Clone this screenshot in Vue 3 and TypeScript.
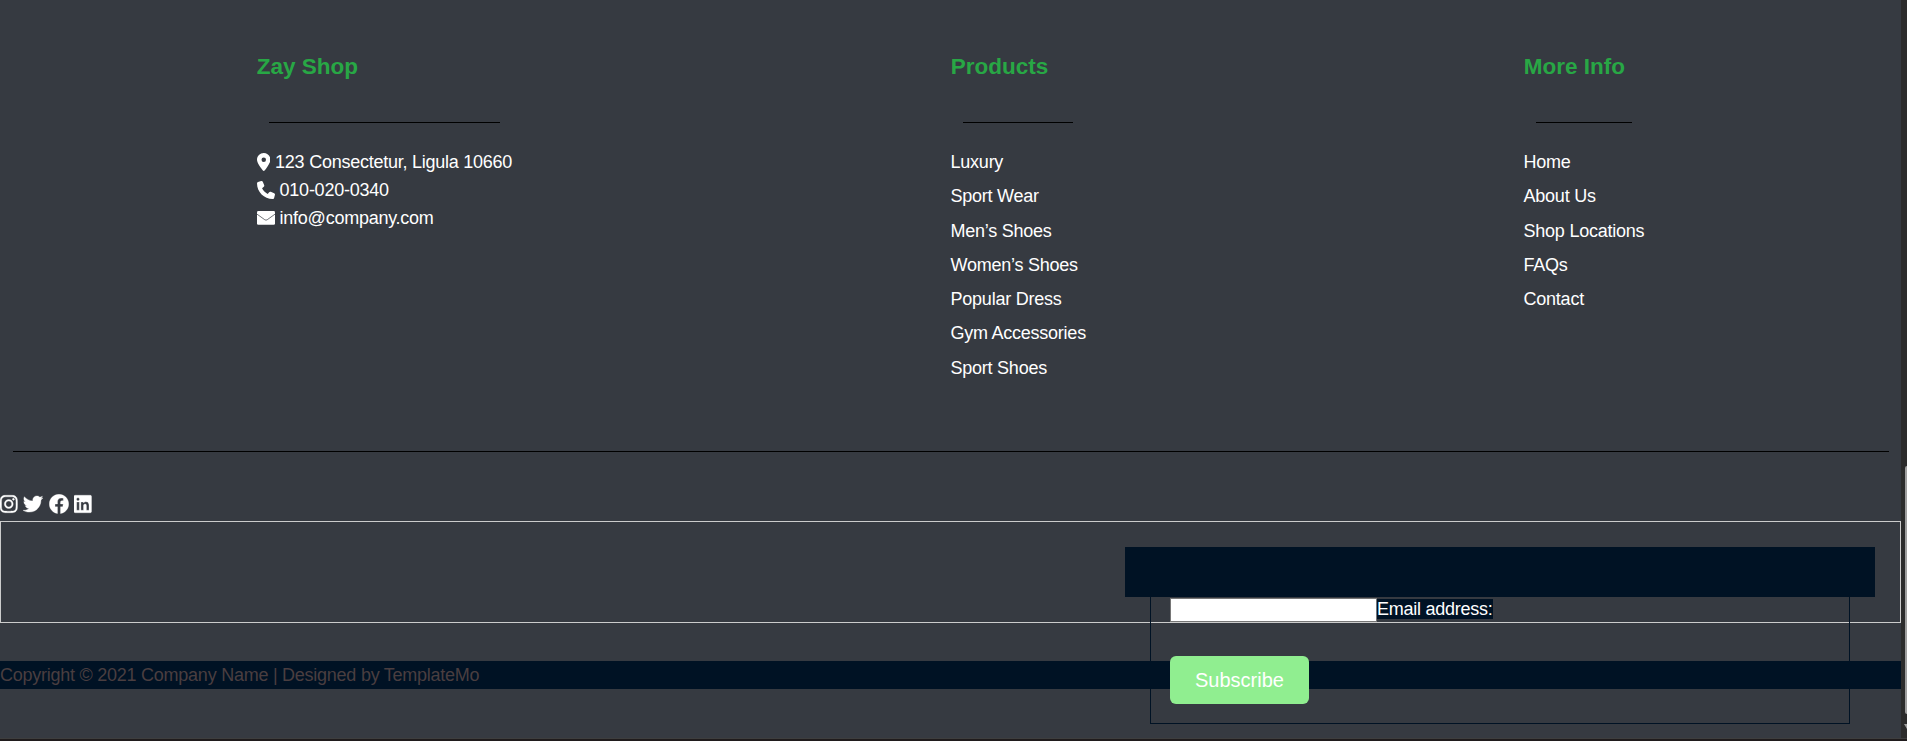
<script setup lang="ts">
interface Icon {
  name: string
  width: number
  height: number
  viewBox: string
  path: string
  crease?: string
}

interface Contact {
  text: string
  icon: Icon
}

interface LinkColumn {
  title: string
  key: string
  links: string[]
}

const contacts: Contact[] = [
  {
    text: '123 Consectetur, Ligula 10660',
    icon: {
      name: 'location',
      width: 13.5,
      height: 18,
      viewBox: '0 0 384 512',
      path: 'M215.7 499.2C267 435 384 279.4 384 192C384 86 298 0 192 0S0 86 0 192c0 87.4 117 243 168.3 307.2c12.3 15.3 35.1 15.3 47.4 0zM192 128a64 64 0 1 1 0 128 64 64 0 1 1 0-128z',
    },
  },
  {
    text: '010-020-0340',
    icon: {
      name: 'phone',
      width: 18,
      height: 18,
      viewBox: '0 0 512 512',
      path: 'M164.9 24.6c-7.7-18.6-28-28.5-47.4-23.2l-88 24C12.1 30.2 0 46 0 64C0 311.4 200.6 512 448 512c18 0 33.8-12.1 38.6-29.5l24-88c5.3-19.4-4.6-39.7-23.2-47.4l-96-40c-16.3-6.8-35.2-2.1-46.3 11.6L304.7 368C234.3 334.7 177.3 277.7 144 207.3L193.3 167c13.7-11.2 18.4-30 11.6-46.3l-40-96z',
    },
  },
  {
    text: 'info@company.com',
    icon: {
      name: 'envelope',
      width: 18,
      height: 18,
      viewBox: '0 0 512 512',
      path: 'M36 60H476Q512 60 512 96V412Q512 448 476 448H36Q0 448 0 412V96Q0 60 36 60z',
      crease: 'M0 146L222 306Q256 328 290 306L512 146',
    },
  },
]

const columns: LinkColumn[] = [
  {
    title: 'Products',
    key: 'products',
    links: ['Luxury', 'Sport Wear', 'Men’s Shoes', 'Women’s Shoes', 'Popular Dress', 'Gym Accessories', 'Sport Shoes'],
  },
  {
    title: 'More Info',
    key: 'info',
    links: ['Home', 'About Us', 'Shop Locations', 'FAQs', 'Contact'],
  },
]

const socials: Icon[] = [
  {
    name: 'Instagram',
    width: 17.5,
    height: 20,
    viewBox: '0 0 448 512',
    path: 'M224.1 141c-63.6 0-114.9 51.3-114.9 114.9s51.3 114.9 114.9 114.9S339 319.5 339 255.9 287.7 141 224.1 141zm0 189.6c-41.1 0-74.7-33.5-74.7-74.7s33.5-74.7 74.7-74.7 74.7 33.5 74.7 74.7-33.6 74.7-74.7 74.7zm146.4-194.3c0 14.9-12 26.8-26.8 26.8-14.9 0-26.8-12-26.8-26.8s12-26.8 26.8-26.8 26.8 12 26.8 26.8zm76.1 27.2c-1.7-35.9-9.9-67.7-36.2-93.9-26.2-26.2-58-34.4-93.9-36.2-37-2.1-147.9-2.1-184.9 0-35.8 1.7-67.6 9.9-93.9 36.1s-34.4 58-36.2 93.9c-2.1 37-2.1 147.9 0 184.9 1.7 35.9 9.9 67.7 36.2 93.9s58 34.4 93.9 36.2c37 2.1 147.9 2.1 184.9 0 35.9-1.7 67.7-9.9 93.9-36.2 26.2-26.2 34.4-58 36.2-93.9 2.1-37 2.1-147.8 0-184.8zM398.8 388c-7.8 19.6-22.9 34.7-42.6 42.6-29.5 11.7-99.5 9-132.1 9s-102.7 2.6-132.1-9c-19.6-7.8-34.7-22.9-42.6-42.6-11.7-29.5-9-99.5-9-132.1s-2.6-102.7 9-132.1c7.8-19.6 22.9-34.7 42.6-42.6 29.5-11.7 99.5-9 132.1-9s102.7-2.6 132.1 9c19.6 7.8 34.7 22.9 42.6 42.6 11.7 29.5 9 99.5 9 132.1s2.7 102.7-9 132.1z',
  },
  {
    name: 'Twitter',
    width: 20,
    height: 20,
    viewBox: '0 0 512 512',
    path: 'M459.37 151.716c.325 4.548.325 9.097.325 13.645 0 138.72-105.583 298.558-298.558 298.558-59.452 0-114.68-17.219-161.137-47.106 8.447.974 16.568 1.299 25.34 1.299 49.055 0 94.213-16.568 130.274-44.832-46.132-.975-84.792-31.188-98.112-72.772 6.498.974 12.995 1.624 19.818 1.624 9.421 0 18.843-1.3 27.614-3.573-48.081-9.747-84.143-51.98-84.143-102.985v-1.299c13.969 7.797 30.214 12.67 47.431 13.319-28.264-18.843-46.781-51.005-46.781-87.391 0-19.492 5.197-37.36 14.294-52.954 51.655 63.675 129.3 105.258 216.365 109.807-1.624-7.797-2.599-15.918-2.599-24.04 0-57.828 46.782-104.934 104.934-104.934 30.213 0 57.502 12.67 76.67 33.137 23.715-4.548 46.456-13.32 66.599-25.34-7.798 24.366-24.366 44.833-46.132 57.827 21.117-2.273 41.584-8.122 60.426-16.243-14.292 20.791-32.161 39.308-52.628 54.253z',
  },
  {
    name: 'Facebook',
    width: 20,
    height: 20,
    viewBox: '0 0 512 512',
    path: 'M504 256C504 119 393 8 256 8S8 119 8 256c0 123.78 90.69 226.38 209.25 245V327.69h-63V256h63v-54.64c0-62.15 37-96.48 93.67-96.48 27.14 0 55.52 4.84 55.52 4.84v61h-31.28c-30.8 0-40.41 19.12-40.41 38.73V256h68.78l-11 71.69h-57.78V501C413.31 482.38 504 379.78 504 256z',
  },
  {
    name: 'LinkedIn',
    width: 17.5,
    height: 20,
    viewBox: '0 0 448 512',
    path: 'M416 32H31.9C14.3 32 0 46.5 0 64.3v383.4C0 465.5 14.3 480 31.9 480H416c17.6 0 32-14.5 32-32.3V64.3c0-17.8-14.4-32.3-32-32.3zM135.4 416H69V202.2h66.5V416zm-33.2-243c-21.3 0-38.5-17.3-38.5-38.5S80.9 96 102.2 96c21.2 0 38.5 17.3 38.5 38.5 0 21.3-17.2 38.5-38.5 38.5zm282.1 243h-66.4V312c0-24.8-.5-56.7-34.5-56.7-34.6 0-39.9 27-39.9 54.9V416h-66.4V202.2h63.7v29.2h.9c8.9-16.8 30.6-34.5 62.9-34.5 67.2 0 79.7 44.3 79.7 101.9V416z',
  },
]
</script>

<template>
  <div class="window">
    <footer class="footer">
      <div class="columns">
        <section class="column column-shop">
          <h2>Zay Shop</h2>
          <hr />
          <ul class="contacts">
            <li v-for="contact in contacts" :key="contact.text">
              <svg :width="contact.icon.width" :height="contact.icon.height" :viewBox="contact.icon.viewBox">
                <path :d="contact.icon.path" />
                <path v-if="contact.icon.crease" class="crease" :d="contact.icon.crease" />
              </svg>
              <span>{{ contact.text }}</span>
            </li>
          </ul>
        </section>
        <section v-for="column in columns" :key="column.key" class="column" :class="`column-${column.key}`">
          <h2>{{ column.title }}</h2>
          <hr />
          <ul class="links">
            <li v-for="link in column.links" :key="link"><a>{{ link }}</a></li>
          </ul>
        </section>
      </div>
      <hr class="divider" />
      <div class="socials">
        <a v-for="social in socials" :key="social.name" :aria-label="social.name">
          <svg :width="social.width" :height="social.height" :viewBox="social.viewBox">
            <path :d="social.path" />
          </svg>
        </a>
      </div>
      <div class="newsletter">
        <form class="subscribe" @submit.prevent>
          <div class="banner"></div>
          <div class="fields">
            <div class="field">
              <input id="email" type="text" />
              <label for="email">Email address:</label>
            </div>
            <button type="submit">Subscribe</button>
          </div>
        </form>
      </div>
      <p class="copyright">Copyright © 2021 Company Name | Designed by TemplateMo</p>
    </footer>
    <div class="scrollbar"><div class="thumb"></div><div class="arrow"></div></div>
    <div class="bottom-edge"></div>
  </div>
</template>

<style>
body {
  margin: 0;
  overflow: hidden;
  background: #363a41;
}
</style>

<style scoped>
.window {
  display: grid;
  grid-template-columns: 1901px 6px;
  grid-template-rows: 738px 3px;
  width: 1907px;
  height: 741px;
  overflow: hidden;
  font-family: "Liberation Sans", Arial, sans-serif;
  font-size: 18px;
  letter-spacing: -0.25px;
  color: #fff;
}

.footer {
  min-width: 0;
  background: #363a41;
}

svg {
  display: block;
  flex: none;
  fill: #fff;
}

.crease {
  fill: none;
  stroke: #363a41;
  stroke-width: 20;
}

ul {
  margin: 0;
  padding: 0;
  list-style: none;
}

.columns {
  display: flex;
  justify-content: space-between;
  height: 451px;
  padding: 0 256px;
  box-sizing: border-box;
}

.column {
  padding-top: 53px;
}

.column-shop {
  width: 257px;
}

.column-products {
  width: 136px;
}

.column-info {
  width: 122px;
}

h2 {
  margin: 0;
  padding-left: 0.7px;
  color: #28a745;
  font-size: 22.5px;
  line-height: 28px;
  letter-spacing: 0;
  white-space: nowrap;
}

hr {
  height: 1px;
  margin: 41px 13px 0;
  border: 0;
  background: #000;
}

.contacts,
.links {
  padding: 25px 0 0 0.6px;
}

.contacts li {
  display: flex;
  align-items: center;
  gap: 5px;
  height: 28px;
  white-space: nowrap;
}

.links li {
  height: 34.3px;
  line-height: 28px;
  white-space: nowrap;
}

.divider {
  margin: 0 12px 0 13px;
}

.socials {
  display: flex;
  align-items: center;
  gap: 5.5px;
  height: 69px;
  padding-top: 35px;
  box-sizing: border-box;
}

.socials path {
  stroke: #fff;
  stroke-width: 8;
}

.newsletter {
  display: flex;
  justify-content: flex-end;
  height: 102px;
  padding: 25px 25px 0 0;
  border: 1px solid #ccc;
  box-sizing: border-box;
}

.subscribe {
  position: relative;
  z-index: 1;
  width: 750px;
  height: 177px;
  flex: none;
}

.banner {
  height: 50px;
  background: #001224;
}

.fields {
  height: 127px;
  margin: 0 25px;
  padding: 1px 19px 0;
  border: 1px solid #001224;
  border-top: 0;
  box-sizing: border-box;
}

.field {
  display: flex;
  height: 24px;
}

input {
  width: 207px;
  height: 24px;
  padding: 0;
  border: 1px solid #767676;
  background: #fff;
  box-sizing: border-box;
}

label {
  height: 20px;
  margin-top: 1px;
  background: #001224;
  line-height: 20px;
}

button {
  width: 139px;
  height: 48px;
  margin: 34px 0 0;
  padding: 0;
  border: 0;
  border-radius: 6px;
  background: #90ee90;
  color: #fff;
  font-family: inherit;
  font-size: 20px;
}

.copyright {
  height: 28px;
  margin: 38px 0 0;
  background: #001224;
  color: #4a3e40;
  line-height: 28px;
}

.scrollbar {
  padding-top: 466px;
  background: #2c2c2c;
}

.thumb {
  height: 248px;
  margin-left: 4px;
  border-radius: 4px 0 0 4px;
  background: #9f9f9f;
}

.arrow {
  width: 0;
  height: 0;
  margin: 10px 0 0 3px;
  border-top: 5px solid #9f9f9f;
  border-left: 3px solid transparent;
}

.bottom-edge {
  grid-column: 1 / -1;
  border-top: 1px solid #3e3e3e;
  background: #201c1d;
}
</style>
